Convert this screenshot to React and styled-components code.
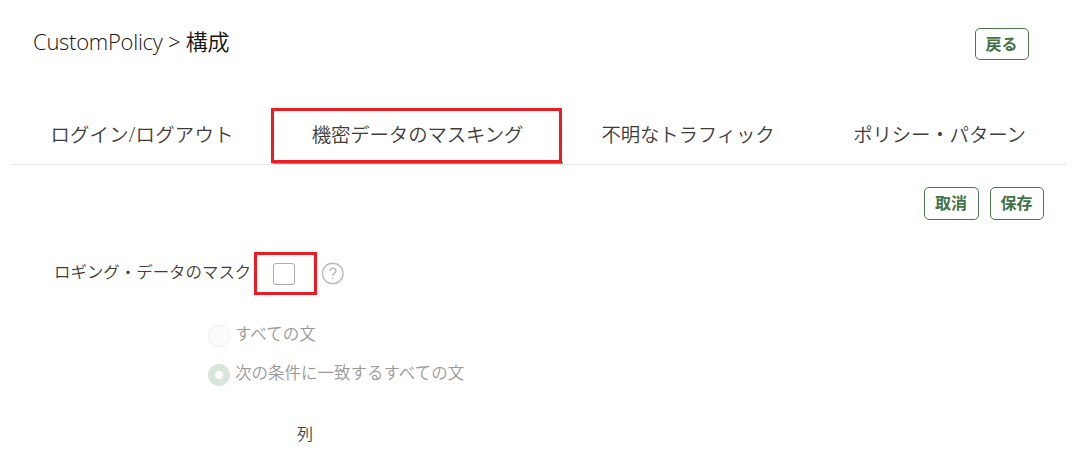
import React, { useState } from 'react';
import styled, { createGlobalStyle } from 'styled-components';

const TABS = [
  { id: 'login', label: 'ログイン/ログアウト', spacing: '0.2px' },
  { id: 'masking', label: '機密データのマスキング' },
  { id: 'unknown', label: '不明なトラフィック' },
  { id: 'patterns', label: 'ポリシー・パターン' },
];

const OPTIONS = [
  { id: 'all', label: 'すべての文' },
  { id: 'matching', label: '次の条件に一致するすべての文' },
];

const App = () => {
  const [activeTab, setActiveTab] = useState('masking');
  const [masked, setMasked] = useState(false);

  return (
    <Page>
      <GlobalStyle />
      <Header>
        <Title>
          CustomPolicy &gt; <TitleJa>構成</TitleJa>
        </Title>
        <Button>戻る</Button>
      </Header>

      <TabBar role="tablist">
        {TABS.map((tab) => (
          <Tab
            key={tab.id}
            role="tab"
            aria-selected={tab.id === activeTab}
            $active={tab.id === activeTab}
            $spacing={tab.spacing}
            onClick={() => setActiveTab(tab.id)}
          >
            <span>{tab.label}</span>
          </Tab>
        ))}
      </TabBar>

      <Actions>
        <Button $wide $tall>取消</Button>
        <Button $tall>保存</Button>
      </Actions>

      <MaskRow>
        <MaskLabel htmlFor="mask">ロギング・データのマスク</MaskLabel>
        <Highlight>
          <Checkbox
            id="mask"
            type="checkbox"
            checked={masked}
            onChange={(e) => setMasked(e.target.checked)}
          />
        </Highlight>
        <HelpIcon />
      </MaskRow>

      <RadioGroup>
        {OPTIONS.map((option) => (
          <RadioRow key={option.id}>
            <Radio
              type="radio"
              name="scope"
              disabled
              defaultChecked={option.id === 'matching'}
            />
            <span>{option.label}</span>
          </RadioRow>
        ))}
      </RadioGroup>

      <ColumnLabel>列</ColumnLabel>
    </Page>
  );
};

const HelpIcon = () => (
  <HelpSvg viewBox="0 0 24 24" fill="none" stroke="#bcbcbc">
    <circle cx="11.7" cy="11.5" r="10.3" strokeWidth="1.4" />
    <path d="M8.7 9.3c0-1.9 1.3-3 3.1-3s3.1 1.1 3.1 2.8c0 2.3-3.1 2.3-3.1 4.8" strokeWidth="1.4" />
    <path d="M11.8 15.4v1.6" strokeWidth="1.5" />
  </HelpSvg>
);

const GlobalStyle = createGlobalStyle`
  * {
    box-sizing: border-box;
  }

  body {
    margin: 0;
    background: #fff;
  }
`;

const Page = styled.div`
  width: 1086px;
  height: 459px;
  overflow: hidden;
  background: #fff;
  color: #403c38;
  font-family: 'Open Sans', 'Noto Sans CJK JP', sans-serif;
  font-weight: 350;
`;

const Header = styled.header`
  display: flex;
  justify-content: space-between;
  height: 108px;
  padding: 28px 57px 0 33px;
`;

const Title = styled.h1`
  margin: -1px 0 0;
  color: #161513;
  font-size: 22px;
  font-weight: 300;
  letter-spacing: -0.27px;
  line-height: 28px;
  white-space: nowrap;
`;

const TitleJa = styled.span`
  font-weight: 350;
`;

const Button = styled.button`
  width: ${({ $wide }) => ($wide ? '55px' : '54px')};
  height: ${({ $tall }) => ($tall ? '33px' : '32px')};
  padding: 0 1px 3px 0;
  border: 1px solid #4a774b;
  border-radius: 5px;
  background: #fff;
  color: #437345;
  font-family: 'Noto Sans CJK JP', sans-serif;
  font-size: 16px;
  font-weight: 700;
  line-height: 24px;
  white-space: nowrap;
  cursor: pointer;
`;

const TabBar = styled.div`
  display: grid;
  grid-template-columns: 262px 290px 250px 253px;
  height: 57px;
  margin-left: 11px;
  width: 1055px;
  border-bottom: 1px solid #e6e6e6;
`;

const Tab = styled.div`
  position: relative;
  display: flex;
  align-items: center;
  justify-content: center;
  padding-bottom: 5px;
  color: #403c38;
  font-size: 19.4px;
  letter-spacing: ${({ $spacing }) => $spacing || '-0.1px'};
  white-space: nowrap;
  cursor: pointer;

  ${({ $active }) => $active && `
    border-bottom: 2px solid #6fa56f;
    padding: 0 1px 3px 0;

    &::after {
      content: '';
      position: absolute;
      inset: 0 1px -1px -2px;
      border: 3px solid #ed1c24;
    }
  `}
`;

const Actions = styled.div`
  display: flex;
  justify-content: flex-end;
  gap: 11px;
  padding: 22px 42px 0 0;
`;

const MaskRow = styled.div`
  display: flex;
  align-items: center;
  height: 43px;
  margin-top: 32px;
  padding-left: 54px;
`;

const MaskLabel = styled.label`
  width: 200px;
  padding-bottom: 3px;
  font-size: 16.45px;
  line-height: 24px;
  white-space: nowrap;
`;

const Highlight = styled.div`
  display: flex;
  align-items: center;
  width: 63px;
  height: 43px;
  padding-left: 16px;
  border: 3px solid #ed1c24;
`;

const Checkbox = styled.input`
  appearance: none;
  width: 22px;
  height: 22px;
  margin: 0;
  border: 1px solid #aaa;
  border-radius: 3px;
  background: #fff;

  &:checked {
    background: #437345;
  }
`;

const HelpSvg = styled.svg`
  width: 24px;
  height: 24px;
  margin-left: 4px;
`;

const RadioGroup = styled.div`
  display: flex;
  flex-direction: column;
  gap: 15px;
  margin-top: 29px;
  padding-left: 208px;
`;

const RadioRow = styled.label`
  display: flex;
  align-items: center;
  height: 24px;
  color: #9b9997;
  font-size: 16.5px;
  line-height: 24px;
  white-space: nowrap;

  span {
    padding-bottom: 4px;
  }
`;

const Radio = styled.input`
  appearance: none;
  width: 22px;
  height: 22px;
  margin: 0 5px 0 0;
  border: 1px solid #efefed;
  border-radius: 50%;
  background: #fbfbf9;

  &:checked {
    border: 7px solid #d9e5da;
    background: #fff;
  }
`;

const ColumnLabel = styled.div`
  margin-top: 35px;
  padding-left: 297px;
  font-size: 16px;
  line-height: 24px;
`;

export default App;
